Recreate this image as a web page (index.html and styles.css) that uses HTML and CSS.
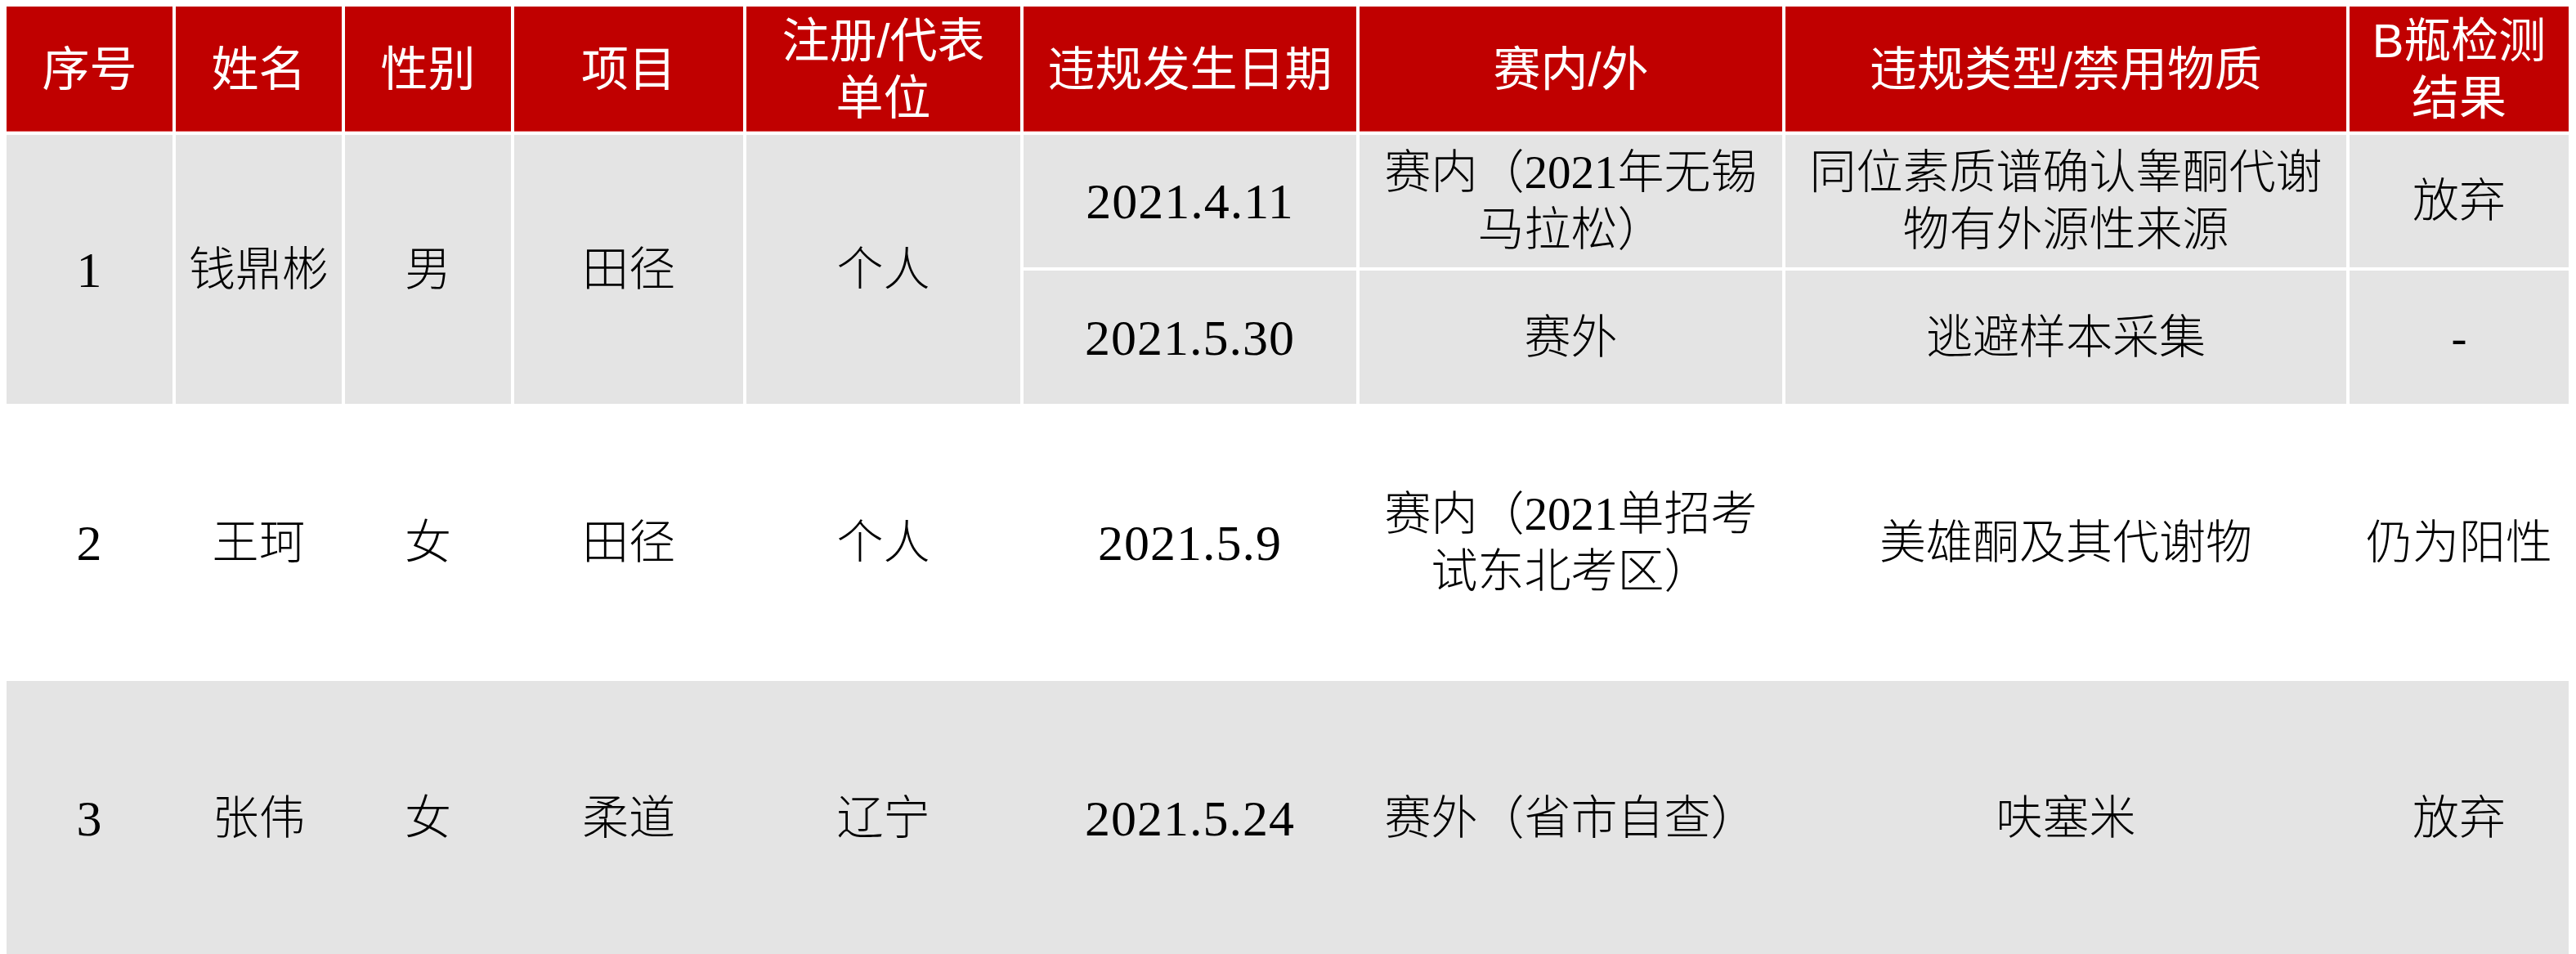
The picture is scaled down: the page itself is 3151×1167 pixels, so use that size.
FILE: index.html
```html
<!DOCTYPE html>
<html lang="zh-CN">
<head>
<meta charset="utf-8">
<title>违规名单</title>
<link rel="stylesheet" href="styles.css">
</head>
<body>
<div class="table">
  <div class="grid head">
    <div class="cell">序号</div>
    <div class="cell">姓名</div>
    <div class="cell">性别</div>
    <div class="cell">项目</div>
    <div class="cell"><span class="ln">注册/代表</span><span class="ln">单位</span></div>
    <div class="cell">违规发生日期</div>
    <div class="cell">赛内/外</div>
    <div class="cell">违规类型/禁用物质</div>
    <div class="cell"><span class="ln">B瓶检测</span><span class="ln">结果</span></div>
  </div>
  <div class="grid body r1">
    <div class="cell span2 num">1</div>
    <div class="cell span2">钱鼎彬</div>
    <div class="cell span2">男</div>
    <div class="cell span2">田径</div>
    <div class="cell span2">个人</div>
    <div class="cell num">2021.4.11</div>
    <div class="cell"><span class="ln">赛内（2021年无锡</span><span class="ln">马拉松）</span></div>
    <div class="cell"><span class="ln">同位素质谱确认睾酮代谢</span><span class="ln">物有外源性来源</span></div>
    <div class="cell">放弃</div>
    <div class="cell num">2021.5.30</div>
    <div class="cell">赛外</div>
    <div class="cell">逃避样本采集</div>
    <div class="cell">-</div>
  </div>
  <div class="grid body r2">
    <div class="cell num">2</div>
    <div class="cell">王珂</div>
    <div class="cell">女</div>
    <div class="cell">田径</div>
    <div class="cell">个人</div>
    <div class="cell num">2021.5.9</div>
    <div class="cell"><span class="ln">赛内（2021单招考</span><span class="ln">试东北考区）</span></div>
    <div class="cell">美雄酮及其代谢物</div>
    <div class="cell">仍为阳性</div>
  </div>
  <div class="grid body r3">
    <div class="cell num">3</div>
    <div class="cell">张伟</div>
    <div class="cell">女</div>
    <div class="cell">柔道</div>
    <div class="cell">辽宁</div>
    <div class="cell num">2021.5.24</div>
    <div class="cell">赛外（省市自查）</div>
    <div class="cell">呋塞米</div>
    <div class="cell">放弃</div>
  </div>
</div>
</body>
</html>
```

FILE: styles.css
```css
html, body {
  background: #ffffff;
}
body {
  margin: 8px;
  overflow: hidden;
}
.table {
  display: flex;
  flex-direction: column;
  gap: 4px;
  width: 3134px;
}
.grid {
  display: grid;
  grid-template-columns: 203px 203px 203px 280px 335px 407px 517px 686px 268px;
  column-gap: 4px;
}
.cell {
  display: flex;
  flex-direction: column;
  align-items: center;
  justify-content: center;
  text-align: center;
  white-space: nowrap;
}
.ln {
  display: block;
  height: 70px;
  line-height: 70px;
}
.head {
  grid-template-rows: 153px;
}
.head .cell {
  background: #c00000;
  color: #ffffff;
  font-family: "Liberation Sans", "Noto Sans CJK SC", sans-serif;
  font-size: 58px;
  line-height: 70px;
  font-weight: 400;
  box-shadow: inset 0 -1px 0 #d94a4a;
}
.body .cell {
  color: #000000;
  font-family: "Liberation Serif", "Noto Sans CJK SC", serif;
  font-size: 57px;
  line-height: 70px;
  font-weight: 300;
}
.body .num {
  font-size: 62px;
  letter-spacing: 1px;
}
.r1 {
  grid-template-rows: 162px 163px;
  row-gap: 4px;
}
.r1 .cell {
  background: #e4e4e4;
}
.span2 {
  grid-row: span 2;
}
.r2 {
  grid-template-rows: 331px;
}
.r3 {
  grid-template-rows: 336px;
  background: #e4e4e4;
}
```
